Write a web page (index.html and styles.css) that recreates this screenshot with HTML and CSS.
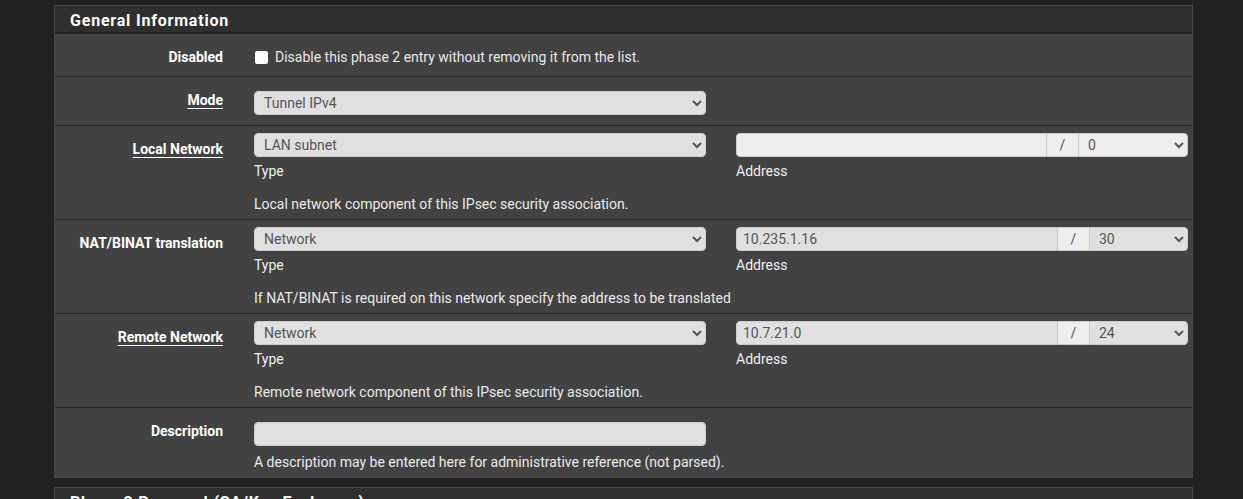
FILE: index.html
```html
<!DOCTYPE html>
<html lang="en">
<head>
    <meta charset="UTF-8">
    <title>IPsec Phase 2</title>
    <link rel="stylesheet" href="styles.css">
</head>
<body>
    <div class="container">
        <div class="panel">
            <div class="panel-heading"><h2 class="panel-title">General Information</h2></div>
            <div class="panel-body">

                <div class="form-row row-disabled">
                    <div class="row-label">Disabled</div>
                    <div class="row-field span-2">
                        <label class="check"><input type="checkbox"> Disable this phase 2 entry without removing it from the list.</label>
                    </div>
                </div>

                <div class="form-row row-mode">
                    <div class="row-label"><span class="required">Mode</span></div>
                    <div class="row-field">
                        <select class="form-control"><option>Tunnel IPv4</option></select>
                    </div>
                </div>

                <div class="form-row row-net">
                    <div class="row-label"><span class="required">Local Network</span></div>
                    <div class="row-field">
                        <select class="form-control"><option>LAN subnet</option></select>
                        <span class="sub-label">Type</span>
                    </div>
                    <div class="row-field">
                        <div class="input-group">
                            <input type="text" class="form-control addr" disabled>
                            <span class="addon">/</span>
                            <select class="form-control mask wide" disabled><option>0</option></select>
                        </div>
                        <span class="sub-label">Address</span>
                    </div>
                    <div class="help">Local network component of this IPsec security association.</div>
                </div>

                <div class="form-row row-net">
                    <div class="row-label">NAT/BINAT translation</div>
                    <div class="row-field">
                        <select class="form-control"><option>Network</option></select>
                        <span class="sub-label">Type</span>
                    </div>
                    <div class="row-field">
                        <div class="input-group">
                            <input type="text" class="form-control addr" value="10.235.1.16">
                            <span class="addon">/</span>
                            <select class="form-control mask"><option>30</option></select>
                        </div>
                        <span class="sub-label">Address</span>
                    </div>
                    <div class="help">If NAT/BINAT is required on this network specify the address to be translated</div>
                </div>

                <div class="form-row row-net">
                    <div class="row-label"><span class="required">Remote Network</span></div>
                    <div class="row-field">
                        <select class="form-control"><option>Network</option></select>
                        <span class="sub-label">Type</span>
                    </div>
                    <div class="row-field">
                        <div class="input-group">
                            <input type="text" class="form-control addr" value="10.7.21.0">
                            <span class="addon">/</span>
                            <select class="form-control mask"><option>24</option></select>
                        </div>
                        <span class="sub-label">Address</span>
                    </div>
                    <div class="help">Remote network component of this IPsec security association.</div>
                </div>

                <div class="form-row row-descr">
                    <div class="row-label">Description</div>
                    <div class="row-field">
                        <input type="text" class="form-control">
                    </div>
                    <div class="help">A description may be entered here for administrative reference (not parsed).</div>
                </div>

            </div>
        </div>

        <div class="panel">
            <div class="panel-heading"><h2 class="panel-title">Phase 2 Proposal (SA/Key Exchange)</h2></div>
        </div>
    </div>
</body>
</html>
```

FILE: styles.css
```css
body {
    margin: 0;
    background-color: #212121;
    font-family: Roboto, 'Liberation Sans', sans-serif;
    font-size: 14px;
    line-height: 20px;
    color: #e8e8e8;
    overflow: hidden;
}

.container {
    width: 1139px;
    margin: 5px 0 0 54px;
}

.panel {
    background-color: #424242;
    border: 1px solid #484848;
    margin-bottom: 9px;
}

.panel-heading {
    background-color: #2f2f2f;
    border-bottom: 2px solid #222;
    height: 26px;
    padding: 0 15px;
}

.panel-title {
    margin: 0;
    padding-top: 1px;
    font-size: 16px;
    font-weight: bold;
    line-height: 27px;
    letter-spacing: 0.8px;
    color: #fff;
}

/* form rows */
.form-row {
    display: grid;
    grid-template-columns: 169px 452px 452px;
    column-gap: 30px;
    align-items: start;
    border-top: 1px solid #262626;
}

.form-row:first-child {
    border-top: 0;
}

.row-label {
    text-align: right;
    padding: 13px 1px 0 0;
    font-weight: bold;
    color: #fff;
}

.required {
    text-decoration: underline;
    text-underline-offset: 3px;
}

.span-2 {
    grid-column: 2 / 4;
}

.row-disabled {
    padding-bottom: 9px;
}

.row-disabled .row-field {
    padding-top: 13px;
}

.row-mode {
    padding-bottom: 10px;
}

.row-mode .row-field {
    padding-top: 14px;
}

.row-net {
    padding-bottom: 5px;
}

.row-net .row-field {
    padding-top: 7px;
}

.row-descr {
    padding-bottom: 5px;
}

.row-descr .row-field {
    padding-top: 14px;
}

.help {
    grid-column: 2 / 4;
    color: #eaeaea;
}

.row-net .help {
    margin-top: 13px;
}

.row-descr .help {
    margin-top: 6px;
}

.sub-label {
    display: block;
    margin-top: 4px;
    color: #f0f0f0;
}

/* controls */
.check {
    display: flex;
    align-items: center;
    gap: 7px;
}

.check input {
    appearance: none;
    margin: 0 0 0 1px;
    width: 13px;
    height: 13px;
    background-color: #fff;
    border-radius: 2px;
}

.form-control {
    box-sizing: border-box;
    width: 100%;
    height: 24px;
    margin: 0;
    padding: 0 6px;
    border: 1px solid #cdcdcd;
    border-radius: 4px;
    background-color: #e0e0e0;
    font-family: Roboto, 'Liberation Sans', sans-serif;
    font-size: 14px;
    color: #555;
    display: block;
}

select.form-control {
    padding: 0 5px;
}

.form-control:disabled {
    background-color: #eee;
    opacity: 1;
    color: #555;
}

.input-group {
    display: flex;
}

.input-group .addr {
    flex: 1;
    border-radius: 4px 0 0 4px;
}

.addon {
    box-sizing: border-box;
    width: 31px;
    height: 24px;
    line-height: 22px;
    text-align: center;
    background-color: #eee;
    border: 1px solid #cdcdcd;
    border-left: 0;
    border-right: 0;
    color: #555;
}

.input-group .mask {
    width: 99px;
    border-radius: 0 4px 4px 0;
}

.input-group .mask.wide {
    width: 110px;
}
```
